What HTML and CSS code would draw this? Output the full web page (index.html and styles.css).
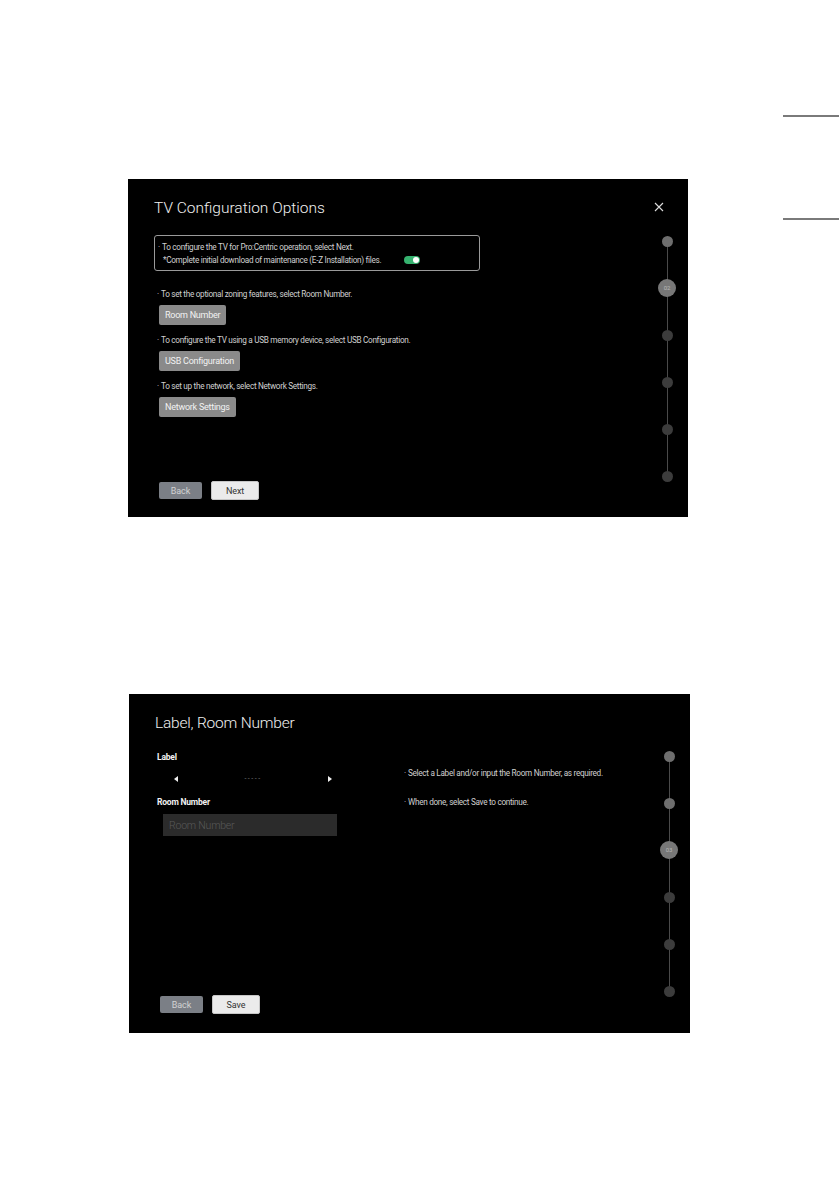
FILE: index.html
```html
<!DOCTYPE html>
<html lang="en">
<head>
    <meta charset="UTF-8">
    <meta name="viewport" content="width=device-width, initial-scale=1.0">
    <title>TV Configuration</title>
    <link rel="stylesheet" href="styles.css">
</head>
<body>

<div class="page">
    <div class="sheets">

        <!-- Screen 1: configuration options -->
        <section class="screen screen-config">
            <div class="screen-main">
                <h1 class="screen-title">TV Configuration Options</h1>

                <div class="notice">
                    <p class="bullet">To configure the TV for Pro:Centric operation, select Next.</p>
                    <p class="notice-sub">
                        <span>*Complete initial download of maintenance (E-Z Installation) files.</span>
                        <span class="toggle"></span>
                    </p>
                </div>

                <p class="hint bullet first">To set the optional zoning features, select Room Number.</p>
                <button class="opt-btn">Room Number</button>

                <p class="hint bullet">To configure the TV using a USB memory device, select USB Configuration.</p>
                <button class="opt-btn">USB Configuration</button>

                <p class="hint bullet">To set up the network, select Network Settings.</p>
                <button class="opt-btn">Network Settings</button>

                <div class="actions">
                    <button class="btn-back">Back</button>
                    <button class="btn-next">Next</button>
                </div>
            </div>

            <div class="screen-side">
                <span class="close">
                    <svg width="10" height="10" viewBox="0 0 10 10"><path d="M1 1L9 9M9 1L1 9" stroke="#dcdcdc" stroke-width="1.1"/></svg>
                </span>
                <ol class="stepper">
                    <li class="step"><span class="dot done"></span></li>
                    <li class="step"><span class="dot current">02</span></li>
                    <li class="step"><span class="dot"></span></li>
                    <li class="step"><span class="dot"></span></li>
                    <li class="step"><span class="dot"></span></li>
                    <li class="step"><span class="dot"></span></li>
                </ol>
            </div>
        </section>

        <!-- Screen 2: label / room number -->
        <section class="screen screen-room">
            <div class="screen-main">
                <h1 class="screen-title">Label, Room Number</h1>

                <div class="room-body">
                    <div class="room-form">
                        <p class="field-label">Label</p>
                        <div class="selector">
                            <span class="arrow arrow-left"></span>
                            <span class="selector-value">-----</span>
                            <span class="arrow arrow-right"></span>
                        </div>
                        <p class="field-label gap">Room Number</p>
                        <input class="room-input" type="text" placeholder="Room Number">
                    </div>
                    <div class="room-help">
                        <p class="bullet">Select a Label and/or input the Room Number, as required.</p>
                        <p class="bullet later">When done, select Save to continue.</p>
                    </div>
                </div>

                <div class="actions">
                    <button class="btn-back">Back</button>
                    <button class="btn-next">Save</button>
                </div>
            </div>

            <div class="screen-side plain">
                <ol class="stepper">
                    <li class="step"><span class="dot done"></span></li>
                    <li class="step"><span class="dot done"></span></li>
                    <li class="step"><span class="dot current">03</span></li>
                    <li class="step"><span class="dot"></span></li>
                    <li class="step"><span class="dot"></span></li>
                    <li class="step"><span class="dot"></span></li>
                </ol>
            </div>
        </section>

    </div>
    <aside class="tab-marks"></aside>
</div>

</body>
</html>
```

FILE: styles.css
```css
body {
    margin: 0;
    background: #fff;
    font-family: Roboto, sans-serif;
}
p {
    margin: 0;
}
.page {
    display: flex;
}
.sheets {
    flex: 1;
    padding-top: 179px;
}
.tab-marks {
    width: 56px;
    height: 101px;
    margin-top: 115px;
    border-top: 2px solid #7a7a7a;
    border-bottom: 2px solid #7a7a7a;
}

/* screens */
.screen {
    display: flex;
    background: #000;
    color: #d0d0d0;
    box-sizing: border-box;
    font-family: Roboto, sans-serif;
    font-size: 8.2px;
    letter-spacing: -0.3px;
    line-height: 12px;
    white-space: nowrap;
}
.screen-config {
    width: 560px;
    height: 338px;
    margin-left: 128px;
}
.screen-room {
    width: 561px;
    height: 339px;
    margin-left: 129px;
    margin-top: 177px;
}
.screen-main {
    flex: 1;
    display: flex;
    flex-direction: column;
    align-items: flex-start;
    padding: 19px 0 17px 26px;
}
.screen-room .screen-main {
    padding-bottom: 19px;
}
.screen-title {
    margin: 0;
    font-weight: 300;
    font-size: 15.5px;
    letter-spacing: 0;
    line-height: 20px;
    color: #f0f0f0;
}
.screen-room .screen-title {
    letter-spacing: -0.2px;
}
.bullet::before {
    content: "·";
    display: inline-block;
    width: 4px;
}

/* notice box */
.notice {
    margin-top: 17px;
    width: 326px;
    height: 36px;
    box-sizing: border-box;
    border: 1px solid #9a9a9a;
    border-radius: 3px;
    padding: 5px 0 0 3px;
}
.notice-sub {
    display: flex;
    align-items: center;
    gap: 23px;
    margin-top: 1px;
    padding-left: 5px;
}
.toggle {
    width: 16px;
    height: 8px;
    border-radius: 4px;
    background: #36b26f;
    display: flex;
    justify-content: flex-end;
    align-items: center;
    padding: 1px;
    box-sizing: border-box;
}
.toggle::after {
    content: "";
    width: 6px;
    height: 6px;
    border-radius: 50%;
    background: #fff;
}

/* option list */
.hint {
    margin: 0 0 5px 3px;
}
.hint.first {
    margin-top: 17px;
}
.opt-btn {
    height: 20px;
    margin: 0 0 9px 5px;
    padding: 0 6px;
    border: none;
    border-radius: 2px;
    background: #8a8a8a;
    color: #f2f2f2;
    font-family: inherit;
    font-size: 9px;
    letter-spacing: -0.25px;
}

/* bottom buttons */
.actions {
    margin-top: auto;
    margin-left: 5px;
    display: flex;
    align-items: center;
    gap: 9px;
}
.actions button {
    font-family: inherit;
    font-size: 9px;
    letter-spacing: -0.1px;
    border-radius: 2px;
    padding: 0;
}
.btn-back {
    width: 43px;
    height: 17px;
    border: none;
    background: #7b7f86;
    color: #d2d2d2;
}
.btn-next {
    width: 48px;
    height: 19px;
    border: 1px solid #c6c6c6;
    background: #ebebeb;
    color: #333;
}

/* right side: close + stepper */
.screen-side {
    width: 42px;
    display: flex;
    flex-direction: column;
    padding-top: 23px;
}
.screen-side.plain {
    padding-top: 53px;
}
.close {
    display: flex;
    width: 10px;
    height: 10px;
    margin-left: 8px;
}
.close + .stepper {
    margin-top: 20px;
}
.stepper {
    list-style: none;
    margin: 0;
    padding: 0;
    display: flex;
    flex-direction: column;
    align-items: center;
    gap: 29px;
    background: linear-gradient(#4a4a4a, #4a4a4a) center / 1px calc(100% - 18px) no-repeat;
}
.step {
    width: 18px;
    height: 18px;
    display: flex;
    align-items: center;
    justify-content: center;
}
.dot {
    width: 11px;
    height: 11px;
    border-radius: 50%;
    background: #3c3c3c;
}
.dot.done {
    background: #6e6e6e;
}
.dot.current {
    width: 18px;
    height: 18px;
    background: #777;
    color: #b8b8b8;
    font-size: 6px;
    letter-spacing: 0;
    display: flex;
    align-items: center;
    justify-content: center;
}

/* room number screen */
.room-body {
    display: flex;
    margin-top: 18px;
}
.room-form {
    width: 188px;
    padding-left: 2px;
}
.field-label {
    font-weight: bold;
    font-size: 8.5px;
    letter-spacing: -0.2px;
    color: #f2f2f2;
}
.field-label.gap {
    margin-top: 11px;
}
.selector {
    display: flex;
    align-items: center;
    justify-content: space-between;
    width: 158px;
    height: 12px;
    margin: 10px 0 0 17px;
}
.arrow {
    width: 0;
    height: 0;
    border-top: 3.5px solid transparent;
    border-bottom: 3.5px solid transparent;
}
.arrow-left {
    border-right: 4px solid #f0f0f0;
}
.arrow-right {
    border-left: 4px solid #f0f0f0;
}
.selector-value {
    color: #777;
    font-size: 7px;
    letter-spacing: 1.5px;
}
.room-input {
    display: block;
    width: 174px;
    height: 22px;
    box-sizing: border-box;
    margin: 6px 0 0 6px;
    padding: 0 6px;
    border: none;
    background: #2b2b2b;
    color: #ddd;
    font-family: inherit;
    font-weight: 300;
    font-size: 10.5px;
    letter-spacing: -0.2px;
}
.room-input::placeholder {
    color: #595959;
}
.room-help {
    margin-left: 59px;
    padding-top: 16px;
}
.room-help .later {
    margin-top: 17px;
}
```
